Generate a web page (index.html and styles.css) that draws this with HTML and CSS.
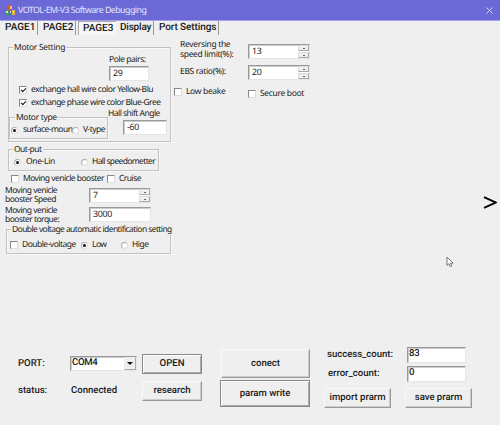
FILE: index.html
```html
<!DOCTYPE html>
<html lang="en">
<head>
<meta charset="utf-8">
<title>VOTOL-EM-V3 Software Debugging</title>
<link rel="stylesheet" href="styles.css">
</head>
<body>
<header class="titlebar">
  <svg class="logo" viewBox="0 0 10 11"><path fill="#d8583e" d="M3 0h4v5H3z"/><path fill="#efc46a" d="M5 1h2v3H5z"/><path fill="#3c9860" d="M0 5h4v5H0z"/><path fill="#d6e8df" d="M1 6h2v2H1z"/><path fill="#3975bd" d="M4 5h3v5H4z"/><path fill="#e1b34c" d="M7 5h3v5H7z"/><path fill="#f4e4bc" d="M5 6h1v2H5zM8 6h1v2H8z"/></svg>
  <span class="title">VOTOL-EM-V3 Software Debugging</span>
  <svg class="close" viewBox="0 0 7 7"><path d="M.5.5l6 6M6.5.5l-6 6"/></svg>
</header>
<nav class="tabs">
  <span class="tab tab-1">PAGE1</span><span class="tab tab-2">PAGE2</span><span class="tab tab-3 active">PAGE3</span><span class="tab tab-4">Display</span><span class="tab tab-5">Port Settings</span>
</nav>
<main class="page">
  <section class="left">
    <div class="group motor">
      <div class="legend">Motor Setting</div>
      <div class="pole">
        <span class="pole-label">Pole pairs:</span>
        <div class="field">29</div>
      </div>
      <div class="row check-row"><i class="check on"></i><span class="hall-wire">exchange hall wire color Yellow-Blu</span></div>
      <div class="row check-row"><i class="check on"></i><span class="phase-wire">exchange phase wire color Blue-Gree</span></div>
      <div class="motor-bottom">
        <div class="group motor-type">
          <div class="legend">Motor type</div>
          <div class="row"><i class="radio on"></i><span class="surface">surface-moun</span><i class="radio"></i><span class="vtype">V-type</span></div>
        </div>
        <div class="angle"><span class="angle-label">Hall shift Angle</span><div class="field">-60</div></div>
      </div>
    </div>
    <div class="group output">
      <div class="legend">Out-put</div>
      <div class="row"><i class="radio on"></i><span class="one-lin">One-Lin</span><i class="radio"></i><span class="hall-speed">Hall speedometter</span></div>
    </div>
    <div class="row boosters"><i class="check"></i><span class="booster-label">Moving venicle booster</span><i class="check"></i><span class="cruise">Cruise</span></div>
    <div class="row setting"><label>Moving venicle<br>booster Speed</label><div class="field spin">7<b></b><b></b></div></div>
    <div class="row setting torque"><label>Moving venicle<br>booster torque:</label><div class="field">3000</div></div>
    <div class="group voltage">
      <div class="legend">Double voltage automatic identification setting</div>
      <div class="row"><i class="check"></i><span class="double">Double-voltage</span><i class="radio on"></i><span class="low">Low</span><i class="radio"></i><span class="hige">Hige</span></div>
    </div>
  </section>
  <section class="right">
    <div class="row limit"><label>Reversing the<br>speed limit(%):</label><div class="field spin">13<b></b><b></b></div></div>
    <div class="row limit"><label>EBS ratio(%):</label><div class="field spin">20<b></b><b></b></div></div>
    <div class="row flags"><div class="row low-beake"><i class="check"></i><span>Low beake</span></div><div class="row secure"><i class="check"></i><span>Secure boot</span></div></div>
  </section>
  <aside class="side">
    <svg class="next" viewBox="0 0 14 13"><path d="M1 1.2L12.6 6.5L1 11.8"/></svg>
    <svg class="pointer" viewBox="0 0 8 12"><path d="M1 1v8.4l1.9-1.7L4.2 10.7l1.6-.7-1.3-2.8H7z"/></svg>
  </aside>
</main>
<footer class="bottom">
  <div class="port-labels"><span class="port">PORT:</span><span class="status">status:</span></div>
  <div class="port-values"><div class="field combo">COM4<span class="drop"></span></div><span class="connected">Connected</span></div>
  <div class="port-buttons"><div class="button strong open">OPEN</div><div class="button research">research</div></div>
  <div class="main-buttons"><div class="button connect">conect</div><div class="button strong write">param write</div></div>
  <div class="files">
    <div class="counter"><span class="success">success_count:</span><div class="field">83</div></div>
    <div class="counter"><span class="error">error_count:</span><div class="field">0</div></div>
    <div class="file-buttons"><div class="button import">import prarm</div><div class="button save">save prarm</div></div>
  </div>
</footer>
</body>
</html>
```
FILE: styles.css
```css
* { box-sizing: border-box; }
body { margin: 0; width: 500px; height: 425px; overflow: hidden; display: flex; flex-direction: column; background: #efefef; color: #1c1c1c; font: 8.5px/10px "Noto Sans", sans-serif; letter-spacing: -.53px; white-space: nowrap; text-rendering: geometricPrecision; }
i, b { font-style: normal; flex: none; }
.titlebar { height: 21px; flex: none; display: flex; align-items: center; background: #6b69d6; border-bottom: 1px solid #a3a2e2; padding: 0 7px 0 5px; color: #e6e6fa; }
.logo { width: 10px; height: 11px; margin-right: 3px; }
.title { font-size: 8.8px; letter-spacing: -.53px; }
.close { width: 7px; height: 7px; margin-left: auto; fill: none; stroke: #e0e0fa; stroke-width: .9; }
.tabs { height: 14px; flex: none; display: flex; color: #1a1a1a; font: 500 10px/14px Roboto, sans-serif; letter-spacing: 0; }
.tab { border-right: 1px solid #999; padding-left: 5px; }
.tab-1 { width: 38px; }
.tab-2 { width: 38px; }
.tab-3 { width: 38px; margin-left: 2px; padding-left: 4px; }
.tab-4 { width: 38px; padding-left: 4px; letter-spacing: -.2px; }
.tab-5 { width: 65px; letter-spacing: -.1px; }
.tab.active { border: 1px solid #aaa; border-right: 0; border-bottom: 0; background: #f7f7f7; line-height: 14px; }
.page { height: 312px; flex: none; display: flex; }
.left { width: 174px; flex: none; padding-top: 12px; }
.row { display: flex; align-items: center; }
.row > span { flex: none; }
.group { border: 1px solid #c2c2c2; box-shadow: inset 1px 1px #f8f8f8, 1px 1px #f8f8f8; }
.legend { width: max-content; background: #efefef; height: 10px; margin-top: -5px; padding: 0 1px; }
.motor { width: 163px; height: 95px; margin-left: 8px; }
.motor > .legend { margin-left: 4px; letter-spacing: -.3px; }
.pole { width: 40px; margin: 2px 0 0 100px; }
.pole-label { display: block; margin-bottom: 1px; letter-spacing: -.45px; }
.field { height: 15px; width: 40px; background: #fff; border: 1px solid #e5e5e5; border-top: 1px solid #999; border-left: 1px solid #999; box-shadow: inset 1px 1px #ccc; padding: 1px 3px; font-size: 8.8px; line-height: 11px; letter-spacing: -.3px; }
.check { width: 8px; height: 8px; border: 1px solid #ddd; border-top-color: #888; border-left-color: #888; background: #fff; }
.check.on::after { content: ""; display: block; width: 4px; height: 2px; border: solid #111; border-width: 0 0 1.4px 1.4px; transform: translate(1px, 1px) rotate(-45deg); }
.check-row { height: 13px; margin-left: 10px; }
.pole + .check-row { margin-top: 2px; }
.check-row span { margin-left: 4px; }
.hall-wire { width: 123px; letter-spacing: -.5px; }
.phase-wire { width: 129px; }
.motor-bottom { display: flex; }
.motor-type { width: 99px; height: 22px; margin-top: 8px; }
.motor-type .legend { margin-left: 5px; letter-spacing: -.35px; }
.motor-type .row { margin: 2px 0 0 1px; }
.radio { width: 7px; height: 7px; border: 1px solid #aaa; border-right-color: #ddd; border-bottom-color: #ddd; border-radius: 50%; background: #fff; }
.radio.on::after { content: ""; display: block; width: 3px; height: 3px; margin: 1px; border-radius: 50%; background: #111; }
.surface { width: 49px; margin-left: 5px; }
.vtype { margin-left: 4px; }
.angle-label { display: block; }
.angle .field { width: 44px; margin: 1px 0 0 15px; }
.output { width: 151px; height: 22px; margin: 7px 0 0 8px; }
.output .legend { margin-left: 4px; }
.output .row { margin: 2px 0 0 5px; }
.one-lin { width: 55px; margin-left: 5px; letter-spacing: -.35px; }
.hall-speed { width: 63px; margin-left: 4px; letter-spacing: -.65px; }
.boosters { height: 12px; margin: 2px 0 0 11px; }
.booster-label { width: 84px; margin-left: 4px; }
.cruise { margin-left: 4px; }
.setting { height: 18px; margin: 1px 0 0 5px; }
.setting label { width: 84px; line-height: 9.5px; }
.setting .field { width: 62px; }
.spin { position: relative; }
.spin b { position: absolute; right: 0; top: 0; width: 11px; height: 6px; background: #efefef; border: 1px solid #aaa; border-left-color: #ddd; border-top-color: #ddd; }
.spin b:last-child { top: 7px; }
.spin b::after { content: ""; position: absolute; left: 4px; top: 2px; width: 2px; height: 1px; background: #666; }
.torque { margin-top: 2px; }
.torque .field { margin-top: -2px; }
.voltage { width: 165px; height: 25px; margin: 5px 0 0 6px; }
.voltage .legend { margin-left: 4px; letter-spacing: -.59px; }
.voltage .row { margin: 5px 0 0 3px; }
.double { width: 59px; margin-left: 4px; }
.low { width: 29px; margin-left: 4px; }
.hige { margin-left: 4px; }
.right { padding-top: 5px; width: 156px; letter-spacing: -.33px; }
.limit { height: 21px; padding-left: 6px; }
.limit label { width: 68px; line-height: 9.5px; }
.limit .field { width: 62px; flex: none; }
.limit:first-child label { margin-top: -2px; }
.limit:first-child .field { margin-top: 2px; }
.limit + .limit { height: 22px; }
.flags { align-items: flex-start; margin-top: 4px; }
.low-beake { width: 74px; }
.low-beake span, .secure span { margin-left: 4px; }
.secure { margin-top: 2px; }
.side { width: 170px; }
.next { display: block; width: 14px; height: 13px; margin: 161px 0 0 153px; fill: none; stroke: #000; stroke-width: 1.9; }
.pointer { display: block; width: 8px; height: 12px; margin: 47px 0 0 116px; fill: #fff; stroke: #555; stroke-width: .8; }
.bottom { display: flex; height: 78px; color: #1a1a1a; font: 500 9.6px/12px Roboto, sans-serif; letter-spacing: -.03px; }
.bottom .field { font: 500 9.6px/12px Roboto, sans-serif; padding: 0 1px; }
.bottom span { display: block; }
.port-labels { width: 70px; padding: 11px 0 0 18px; }
.status { margin-top: 15px; }
.port-values { width: 72px; padding-top: 9px; }
.port-values .combo { width: 67px; display: flex; justify-content: space-between; padding-right: 0; }
.drop { width: 12px; height: 13px; background: #efefef; border: 1px solid #aaa; border-top-color: #eee; border-left-color: #eee; padding: 4px 0 0 2px; }
.drop::after { content: ""; display: block; width: 0; border: 3px solid transparent; border-top-color: #111; border-bottom: 0; }
.connected { margin: 14px 0 0 1px; }
.port-buttons { width: 79px; padding-top: 7px; }
.button { display: flex; justify-content: center; align-items: center; border: 1px solid #999; border-top-color: #f8f8f8; border-left-color: #f8f8f8; box-shadow: inset -1px -1px #ccc; }
.strong { border-color: #888; box-shadow: inset 1px 1px #fff, inset -1px -1px #aaa; }
.open { width: 60px; height: 20px; }
.research { width: 60px; height: 20px; margin-top: 7px; }
.main-buttons { width: 103px; padding-top: 2px; margin-left: -1px; }
.connect { width: 89px; height: 29px; margin-left: 1px; }
.write { width: 90px; height: 27px; margin-top: 2px; }
.files { width: 150px; }
.counter { display: flex; height: 19px; padding-left: 4px; }
.counter > span { width: 80px; margin-top: 2px; }
.counter .error { padding-left: 1px; }
.counter .field { width: 59px; height: 16px; }
.file-buttons { display: flex; gap: 14px; margin: 3px 0 0 1px; }
.import, .save { width: 67px; height: 20px; }
```
